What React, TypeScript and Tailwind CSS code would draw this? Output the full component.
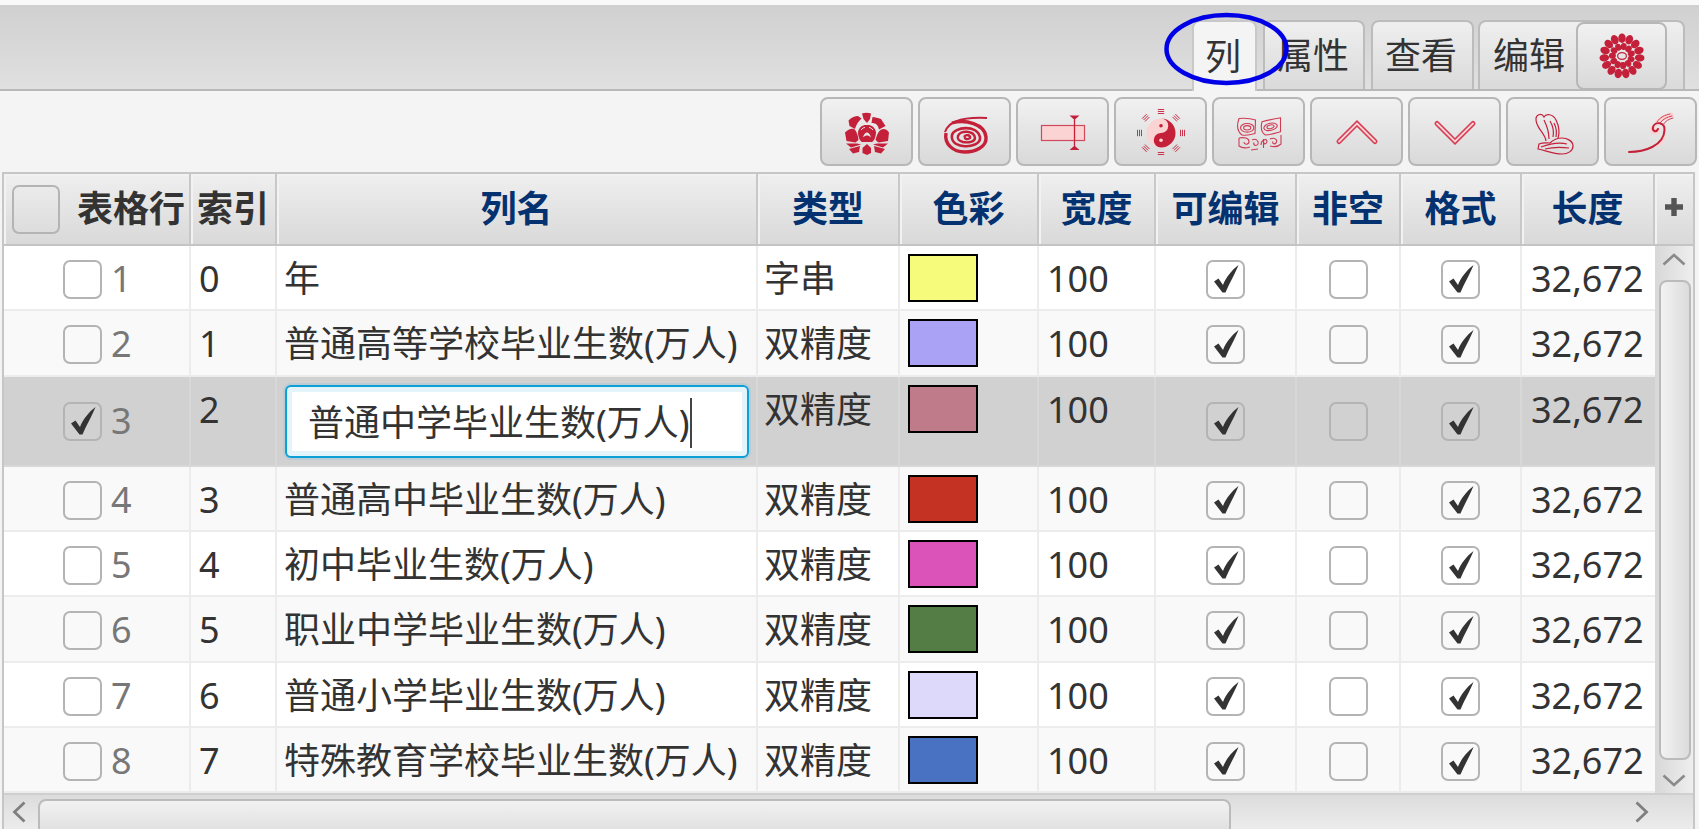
import React from "react";

const RED = "#c4203a";
const PINK = "#fbd3d3";

const rows = [
  { id: 1, name: "年", type: "字串", color: "bg-[#f6fb7c]", h: "h-[65px]", bg: "bg-white" },
  { id: 2, name: "普通高等学校毕业生数(万人)", type: "双精度", color: "bg-[#aaa2f4]", h: "h-[66px]", bg: "bg-[#f9f9f9]" },
  { id: 3, name: "普通中学毕业生数(万人)", type: "双精度", color: "bg-[#c07b8b]", h: "h-[90px]", bg: "bg-[#d1d1d1]", selected: true },
  { id: 4, name: "普通高中毕业生数(万人)", type: "双精度", color: "bg-[#c33222]", h: "h-[65px]", bg: "bg-[#f9f9f9]" },
  { id: 5, name: "初中毕业生数(万人)", type: "双精度", color: "bg-[#db52b8]", h: "h-[65px]", bg: "bg-white" },
  { id: 6, name: "职业中学毕业生数(万人)", type: "双精度", color: "bg-[#537d45]", h: "h-[66px]", bg: "bg-[#f9f9f9]" },
  { id: 7, name: "普通小学毕业生数(万人)", type: "双精度", color: "bg-[#dcd9fb]", h: "h-[65px]", bg: "bg-white" },
  { id: 8, name: "特殊教育学校毕业生数(万人)", type: "双精度", color: "bg-[#4a72c2]", h: "h-[65px]", bg: "bg-[#f9f9f9]" },
];

const gridCols = "grid grid-cols-[187px_86px_481px_142px_139px_117px_141px_104px_121px_133px]";

const headers = ["列名", "类型", "色彩", "宽度", "可编辑", "非空", "格式", "长度"];

const Check = () => (
  <svg viewBox="0 0 35 35" className="w-[35px] h-[35px]">
    <path d="M6 19.5 L10.5 16.5 L15 23 C18 15 24 8 30.5 3 C27.5 11 21.5 21 17.5 30.5 L14.5 30.5 Z" fill="#333" />
  </svg>
);

const Box = ({ checked, className = "w-[39px] h-[39px]" }: { checked?: boolean; className?: string }) => (
  <div className={`${className} border-2 border-[#b4b4b4] rounded-[7px] flex items-center justify-center shrink-0`}>
    {checked && <Check />}
  </div>
);

const FlowerIcon = () => (
  <svg viewBox="0 0 48 48" className="w-[48px] h-[48px]">
    <g transform="translate(24 24)">
      {Array.from({ length: 15 }).map((_, i) => (
        <ellipse key={i} cx="0" cy="-17.8" rx="3.7" ry="4.8" fill={RED} transform={`rotate(${i * 24})`} />
      ))}
      {Array.from({ length: 11 }).map((_, i) => (
        <ellipse key={i} cx="0" cy="-9.6" rx="3" ry="3.5" fill={RED} transform={`rotate(${i * 32.7 + 10})`} />
      ))}
      <ellipse rx="4.4" ry="3.4" fill="none" stroke={RED} strokeWidth="1.2" />
    </g>
  </svg>
);

const LotusIcon = () => (
  <svg viewBox="0 0 48 48" className="w-[48px] h-[48px]">
    <g fill={RED}>
      <path d="M19 5.5 C22 4.5 25 4.5 28 5.5 L27 11 L24 15 L20.5 11 Z" />
      <path d="M5.5 12.5 C9 9 12 8 15 8 L18.5 10.5 C15 14 13 17 12 21 L6.5 18 Z" />
      <path d="M29.5 9 C32 9 35 10 38 11 L42.5 18 L36 21.5 C35 17 33 15 28.5 15 Z" />
      <path d="M2 24.5 C5 21.5 8 20 11 21 C13.5 23 15 27 15.5 32 L12.5 34.5 L3.5 33 Z" />
      <path d="M46 24.5 C44 21.5 41 20 37.5 22 C35 24 33.5 28 32.5 32 L35.5 34.5 L45 33 Z" />
      <path d="M15 24 C16 19 20 16.5 24 17 C28 16.5 32 19 33 24 C33 29 31 33 29 34 L19 34 C17 33 15 29 15 24 Z" />
      <path d="M3 35.5 L14 35.5 L18 36.5 L8 39.5 Z" />
      <path d="M45 35.5 L34 35.5 L30 36.5 L40 39.5 Z" />
      <path d="M6 41 L17 38 L16 44 L10 45.5 Z" />
      <path d="M42 41 L31 38 L32 44 L38 45.5 Z" />
      <path d="M24 36 L28 40 L28 45 L24 47 L19.5 45 L19.5 40 Z" />
    </g>
    <path d="M20 29.5 C21 25.5 23 24.5 24 24.5 C25 24.5 27 25.5 28 29.5 C26.5 28 25 27.5 24 27.5 C23 27.5 21.5 28 20 29.5 Z" fill="#e6e6e6" />
    <path d="M18 22 C19.5 20 21 19.5 22 19.5 M30 22 C28.5 20 27 19.5 26 19.5" fill="none" stroke="#e6e6e6" strokeWidth="1" />
  </svg>
);

const SpiralIcon = () => (
  <svg viewBox="0 0 48 48" className="w-[48px] h-[48px]" fill="none" stroke={RED}>
    <path d="M4 24 C8 12 26 9 46 10" strokeWidth="2" />
    <path d="M11 15 C24 11 44 16 45 29 C46 39 34 44 24 44 C12 44 3 36 5 25" strokeWidth="3.4" />
    <path d="M11 27 C13 19 36 16 39 29 C40 36 30 39 22 38 C14 37 10 33 11 27" strokeWidth="2.6" />
    <path d="M17 28 C19 22 33 22 34 30 C34 34 27 35 22 34 C18 33 16 31 17 28" strokeWidth="2.4" />
    <path d="M23 29 C25 26 30 27 29 30 C27 32 23 31 24 29" strokeWidth="2.4" />
  </svg>
);

const ColumnIcon = () => (
  <svg viewBox="0 0 48 48" className="w-[48px] h-[48px]">
    <rect x="2.5" y="17.5" width="43" height="15" fill={PINK} stroke="#d04a5e" strokeWidth="1.2" />
    <path d="M35.5 9 V41" stroke={RED} strokeWidth="1.3" />
    <path d="M30.5 7.5 H40.5 L36.5 11 H34.5 Z M30.5 42 H40.5 L36.5 38.5 H34.5 Z" fill={RED} />
  </svg>
);

const TaijiIcon = () => (
  <svg viewBox="0 0 48 48" className="w-[48px] h-[48px]">
    <circle cx="24" cy="25" r="14.5" fill={PINK} />
    <path d="M24 10.5 A14.5 14.5 0 0 1 24 39.5 A7.25 7.25 0 0 1 24 25 A7.25 7.25 0 0 0 24 10.5 Z" fill={RED} />
    <circle cx="24" cy="17.7" r="1.8" fill={RED} />
    <circle cx="24" cy="32.3" r="1.8" fill={PINK} />
    {Array.from({ length: 8 }).map((_, i) => (
      <g key={i} transform={`translate(24 25) rotate(${i * 45})`} stroke={RED} strokeWidth="0.9">
        <path d="M-3.2 -19.5 H3.2 M-3.2 -21.5 H3.2 M-3.2 -23.5 H3.2" />
      </g>
    ))}
  </svg>
);

const MaskIcon = () => (
  <svg viewBox="0 0 48 48" className="w-[48px] h-[48px]" fill="none" stroke="#cf3c54" strokeWidth="1.1">
    <path d="M4 10.5 C10 10 16 10.5 20.5 12 L20 25.5 C15 27 10 27.5 7 27 C3 24 1 19 4 10.5 Z" />
    <ellipse cx="12.2" cy="19.8" rx="6.7" ry="4.3" />
    <ellipse cx="12.2" cy="19.8" rx="3.6" ry="2.2" />
    <path d="M27 13.8 C33 12 39 11 45.5 9.8 L45.5 23.8 C41 25 35 27 30.5 27 C27 25 25 22 27 13.8 Z" />
    <ellipse cx="35.5" cy="18.8" rx="6.8" ry="3.6" transform="rotate(-14 35.5 18.8)" />
    <ellipse cx="35.5" cy="18.8" rx="3.6" ry="1.8" transform="rotate(-14 35.5 18.8)" />
    <path d="M4 30 C9 29 14 30 14 33.5 C14 37 9 37 9 34 M4 30 L4 38 C8 41 12 40 15 39" />
    <path d="M17 32 C21 30 24 33 23 36 C21 39 18 37 19 34.5 M23 41 L16 42" />
    <path d="M26 37 C26 32 31 30 32 33 C32 36 29 37 29 34.5 M28.5 31 L28.5 40" />
    <path d="M35 31 C40 29 43 32 41 35 C39 37 37 35 38 33.5 M46 27 L46 36 C43 39 39 39 35 38" />
  </svg>
);

const Chevron = ({ up }: { up?: boolean }) => {
  const d = up ? "M6 33.5 L24 15.5 L42 33.5" : "M6 15.5 L24 33.5 L42 15.5";
  return (
    <svg viewBox="0 0 48 48" className="w-[48px] h-[48px]" fill="none" strokeLinecap="round" strokeLinejoin="miter">
      <path d={d} stroke="#d63c55" strokeWidth="5" />
      <path d={d} stroke={PINK} strokeWidth="1.8" />
    </svg>
  );
};

const ButterflyIcon = () => (
  <svg viewBox="0 0 48 48" className="w-[48px] h-[48px]" fill="none" stroke={RED} strokeWidth="1.2">
    <path d="M17 33 C16 24 6 20 7 10 C8 6 13 5 15 9 C17 5 24 6 27 12 C30 18 31 24 29 30" />
    <path d="M20 31 C20 24 18 18 15 12 M24 29 C25 24 24 18 21 13 M27 29 C28 24 27 19 25 15" />
    <path d="M9 41 L10 36 C15 34 17 35 21 35 C24 32 28 30 33 30 C38 30 44 33 44 38 C44 43 39 46 33 46 C25 46 18 43 9 41 Z" />
    <path d="M12 39 C20 36 30 34 38 36 M16 41 C24 39 32 39 40 40" />
  </svg>
);

const SwirlIcon = () => (
  <svg viewBox="0 0 48 48" className="w-[48px] h-[48px]" fill="none" strokeLinecap="round">
    <path d="M30 15 C34 11 39 8 44 7 M26 20 C24 25 29 26 31 22" stroke={PINK} strokeWidth="5" />
    <path d="M37 20 C39 27 36 34 32 37" stroke={PINK} strokeWidth="3" />
    <path d="M2 44 C17 44 37 38 37.5 22 C38 14 28 13 26 19 C25 23 29 25 31 21" stroke={RED} strokeWidth="2" />
    <path d="M30 14 C33 9 38 7 43 6 M33 15 C36 11 40 9 45 8 M36 17 C38 13 42 11 46 10" stroke="#d6405a" strokeWidth="1" />
  </svg>
);

const ToolButton = ({ children }: { children: React.ReactNode }) => (
  <button className="w-[93px] h-[69px] flex items-center justify-center border-2 border-[#b7b7b7] rounded-[8px] bg-gradient-to-b from-[#f1f1f1] to-[#d9d9d9]">
    {children}
  </button>
);

const Tab = ({ label, className = "" }: { label: string; className?: string }) => (
  <div className={`h-[69px] flex items-center border-2 border-b-0 border-[#bcbcbc] rounded-t-[8px] bg-gradient-to-b from-[#efefef] to-[#dadada] ${className}`}>
    {label}
  </div>
);

const HeadCell = ({ children, className = "justify-center" }: { children: React.ReactNode; className?: string }) => (
  <div className={`flex items-center border-r-2 border-[#c8c8c8] shadow-[inset_2px_2px_0_#f2f2f2] ${className}`}>
    {children}
  </div>
);

export default function App() {
  return (
    <div className="w-[1699px] h-[829px] overflow-hidden flex flex-col bg-[#f4f4f4] text-[36px] leading-none text-[#333] font-['Noto_Sans','Noto_Sans_CJK_SC',sans-serif]">
      <div className="h-[5px] shrink-0 bg-[#f9f9f9]" />

      {/* Tabs */}
      <div className="relative h-[86px] shrink-0 flex items-end justify-end pr-[14px] border-b-2 border-[#b8b8b8] bg-gradient-to-b from-[#d0d0d0] to-[#e0e0e0]">
        <div className="h-[71px] -mb-[2px] w-[65px] mr-[6px] pr-[3px] flex items-center justify-center border-2 border-b-0 border-[#c8c8c8] rounded-t-[8px] bg-[#f4f4f4]">
          列
        </div>
        <Tab label="属性" className="w-[102px] mr-[6px] pr-[2px] justify-center" />
        <Tab label="查看" className="w-[103px] mr-[4px] pr-[3px] justify-center" />
        <Tab label="编辑" className="w-[207px] pl-[13px]" />
        <button className="absolute left-[1576px] top-[17px] w-[91px] h-[68px] flex items-center justify-center border-2 border-[#b7b7b7] rounded-[8px] bg-gradient-to-b from-[#f1f1f1] to-[#d9d9d9]">
          <FlowerIcon />
        </button>
        <svg className="absolute left-[1163px] top-[6px] w-[127px] h-[76px]" viewBox="0 0 127 76" fill="none">
          <ellipse cx="63.5" cy="38" rx="60" ry="34" stroke="#0000e6" strokeWidth="4.5" />
        </svg>
      </div>

      {/* Toolbar */}
      <div className="h-[81px] shrink-0 flex justify-end gap-[5px] pt-[6px] pr-[2px]">
        <ToolButton><LotusIcon /></ToolButton>
        <ToolButton><SpiralIcon /></ToolButton>
        <ToolButton><ColumnIcon /></ToolButton>
        <ToolButton><TaijiIcon /></ToolButton>
        <ToolButton><MaskIcon /></ToolButton>
        <ToolButton><Chevron up /></ToolButton>
        <ToolButton><Chevron /></ToolButton>
        <ToolButton><ButterflyIcon /></ToolButton>
        <ToolButton><SwirlIcon /></ToolButton>
      </div>

      {/* Table */}
      <div className="ml-[2px] w-[1693px] flex-1 min-h-0 flex flex-col border-x-2 border-t-2 border-[#c6c6c6]">
        <div className="h-[72px] shrink-0 flex border-b-2 border-[#c4c4c4] bg-gradient-to-b from-[#efefef] to-[#d9d9d9] font-bold">
          <div className={`${gridCols} w-[1651px]`}>
            <HeadCell className="pl-[8px] gap-[17px]">
              <Box className="w-[48px] h-[49px]" />
              <span>表格行</span>
            </HeadCell>
            <HeadCell>索引</HeadCell>
            {headers.map((h) => (
              <HeadCell key={h}>
                <span className="text-[#04316f]">{h}</span>
              </HeadCell>
            ))}
          </div>
          <div className="flex-1 flex items-center justify-center shadow-[inset_2px_2px_0_#f2f2f2]">
            <svg viewBox="0 0 18 18" className="w-[18px] h-[18px] -mt-[5px]">
              <path d="M6.3 0 H11.7 V6.3 H18 V11.7 H11.7 V18 H6.3 V11.7 H0 V6.3 H6.3 Z" fill="#555" />
            </svg>
          </div>
        </div>

        <div className="h-[547px] shrink-0 flex">
          <div className="w-[1651px] flex flex-col">
            {rows.map((r, i) => {
              const line = r.selected ? "border-[#d8d8d8]" : "border-[#ececec]";
              const cell = `border-r-2 ${line}`;
              const top = "h-[66px] flex items-center";
              return (
                <div key={r.id} className={`${gridCols} ${r.h} ${r.bg} border-b-2 ${line}`}>
                  <div className={`${cell} flex items-center pl-[59px] gap-[9px] text-[#777]`}>
                    <Box checked={r.selected} />
                    <span>{r.id}</span>
                  </div>
                  <div className={cell}>
                    <div className={`${top} pl-[8px]`}>{i}</div>
                  </div>
                  {r.selected ? (
                    <div className={`${cell} pl-[8px] pt-[8px]`}>
                      <div className="w-[464px] h-[73px] flex items-center pl-[21px] pt-[2px] whitespace-nowrap border-2 border-[#0ba0d6] rounded-[6px] bg-white shadow-[0_0_0_2px_#bcccd4,inset_0_0_0_5px_#e3f4fb]">
                        {r.name}
                        <span className="w-[2px] h-[50px] bg-[#444]" />
                      </div>
                    </div>
                  ) : (
                    <div className={cell}>
                      <div className={`${top} pl-[7px] whitespace-nowrap`}>{r.name}</div>
                    </div>
                  )}
                  <div className={cell}>
                    <div className={`${top} pl-[6px]`}>{r.type}</div>
                  </div>
                  <div className={`${cell} pl-[8px] pt-[8px]`}>
                    <div className={`w-[70px] h-[48px] border-2 border-black ${r.color}`} />
                  </div>
                  <div className={cell}>
                    <div className={`${top} pl-[8px]`}>100</div>
                  </div>
                  <div className={`${cell} flex items-center justify-center`}>
                    <Box checked />
                  </div>
                  <div className={`${cell} flex items-center justify-center`}>
                    <Box />
                  </div>
                  <div className={`${cell} flex items-center justify-center`}>
                    <Box checked />
                  </div>
                  <div>
                    <div className={`${top} pl-[9px]`}>32,672</div>
                  </div>
                </div>
              );
            })}
          </div>

          {/* Vertical scrollbar */}
          <div className="flex-1 flex flex-col items-center pt-[7px] bg-gradient-to-r from-[#d8d8d8] to-[#eeeeee]">
            <svg viewBox="0 0 24 13" className="w-[24px] h-[13px] shrink-0" fill="none">
              <path d="M1.5 11.5 L12 2 L22.5 11.5" stroke="#8a8a8a" strokeWidth="2.6" />
            </svg>
            <div className="w-[32px] h-[480px] mt-[14px] ml-[2px] shrink-0 border-2 border-[#bbbbbb] rounded-[8px] bg-gradient-to-r from-[#f2f2f2] to-[#dcdcdc]" />
            <svg viewBox="0 0 24 13" className="w-[24px] h-[13px] shrink-0 mt-[14px]" fill="none">
              <path d="M1.5 1.5 L12 11 L22.5 1.5" stroke="#8a8a8a" strokeWidth="2.6" />
            </svg>
          </div>
        </div>

        {/* Horizontal scrollbar */}
        <div className="flex-1 min-h-0 flex border-t-2 border-[#cfcfcf] bg-gradient-to-b from-[#dcdcdc] to-[#ececec]">
          <div className="w-[34px] h-full flex items-center pl-[8px] shrink-0">
            <svg viewBox="0 0 14 22" className="w-[14px] h-[22px]" fill="none">
              <path d="M12.5 1.5 L2.5 11 L12.5 20.5" stroke="#7f7f7f" strokeWidth="2.8" />
            </svg>
          </div>
          <div className="w-[1193px] h-[40px] mt-[4px] shrink-0 border-2 border-[#bbbbbb] rounded-[8px] bg-gradient-to-b from-[#f2f2f2] to-[#dcdcdc]" />
          <div className="flex-1 flex items-center justify-end pr-[44px]">
            <svg viewBox="0 0 14 22" className="w-[14px] h-[22px]" fill="none">
              <path d="M1.5 1.5 L11.5 11 L1.5 20.5" stroke="#7f7f7f" strokeWidth="2.8" />
            </svg>
          </div>
        </div>
      </div>
    </div>
  );
}
